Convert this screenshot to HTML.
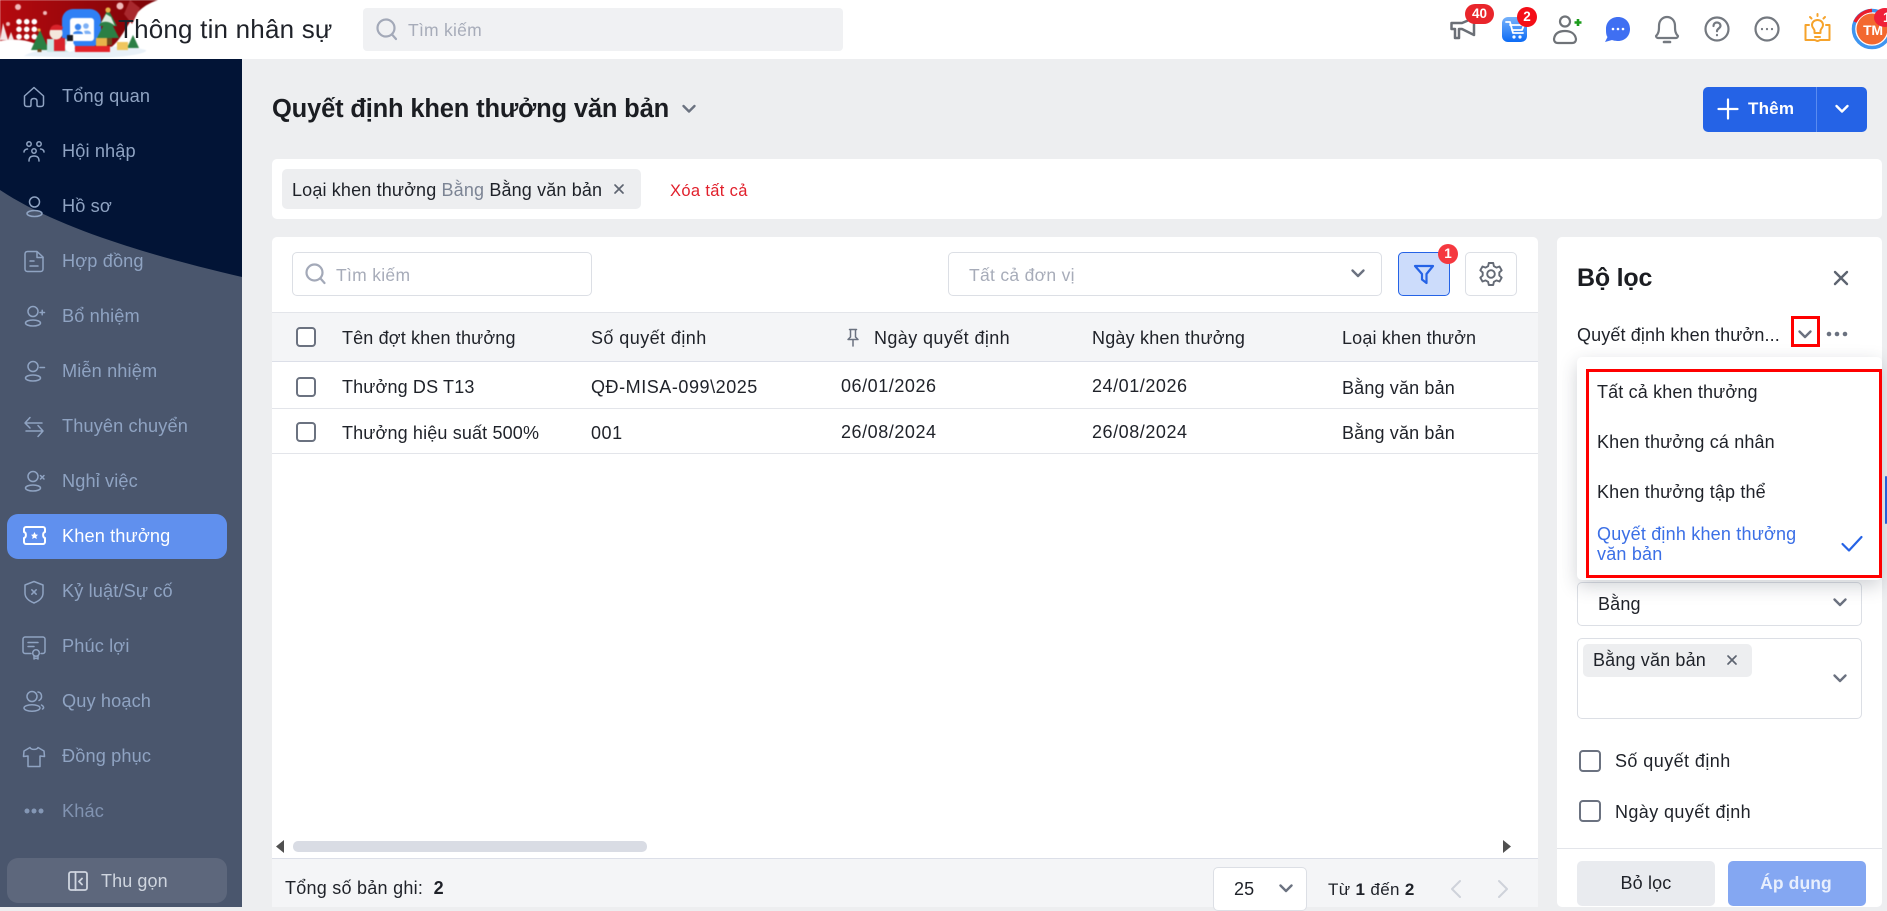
<!DOCTYPE html>
<html lang="vi"><head><meta charset="utf-8"><title>Thông tin nhân sự</title>
<style>
*{box-sizing:border-box}
html,body{margin:0;padding:0;width:1887px;height:907px;overflow:hidden;background:#edeef0;font-family:"Liberation Sans","DejaVu Sans",sans-serif;color:#1f2229}
.a{position:absolute}
.t{position:absolute;white-space:nowrap;font-size:18px;letter-spacing:.15px;line-height:20px}
.w{background:#fff;position:absolute;border-radius:5px}
.nav{color:#8fa3c2;font-size:18.2px;left:62px;letter-spacing:.12px}
.ic{position:absolute;left:22px;fill:none;stroke:#8fa3c2;stroke-width:1.5;stroke-linecap:round;stroke-linejoin:round}
.box{position:absolute;background:#fff;border:1px solid #dcdfe5;border-radius:5px}
.cb{position:absolute;width:20px;height:20px;border:2px solid #6b7280;border-radius:4px;background:#fff}
.hl{position:absolute;height:1px;background:#e3e5ea}
svg{position:absolute;overflow:visible}
.s{fill:none;stroke-linecap:round;stroke-linejoin:round}
</style></head><body>

<!-- header -->
<div class="a" style="left:0;top:0;width:1887px;height:59px;background:#fff"></div>
<svg style="left:0;top:0;filter:blur(.4px)" width="170" height="59" viewBox="0 0 170 59">
<defs><linearGradient id="rd" x1="0" x2="1"><stop offset="0" stop-color="#b50a0f"/><stop offset="1" stop-color="#7c0408"/></linearGradient></defs>
<path d="M0 0H158C146 4 138 10 130 22C122 34 115 50 100 52H0Z" fill="url(#rd)"/>
<path d="M124 14L130 0L140 8L132 24Z" fill="#a8282d"/>
<path d="M0 41C16 38 30 40 42 47C60 52 110 49 146 48V59H0Z" fill="#fff"/>
<path d="M24 56C40 46 70 50 85 48C110 46 130 46 146 50C148 54 120 58 90 58Z" fill="#e9f1f8"/>
<path d="M0 40L3 23L8 40ZM8 40L11 32L14 40Z" fill="#f3e5e5"/>
<g fill="#f0b9b9"><circle cx="18" cy="7" r="3"/><circle cx="120" cy="6" r="3.500"/><circle cx="45" cy="13" r="2"/><circle cx="8" cy="24" r="2"/></g>
<g fill="#fff"><circle cx="19" cy="21.700" r="2.800"/><circle cx="26.700" cy="21.700" r="2.800"/><circle cx="34.300" cy="21.700" r="2.800"/><circle cx="19" cy="29.300" r="2.800"/><circle cx="26.700" cy="29.300" r="2.800"/><circle cx="34.300" cy="29.300" r="2.800"/><circle cx="19" cy="36.700" r="2.800"/><circle cx="26.700" cy="36.700" r="2.800"/><circle cx="34.300" cy="36.700" r="2.800"/></g>
<rect x="62" y="9" width="39" height="38" rx="11" fill="#2f80f5"/>
<rect x="70" y="18" width="24" height="23" rx="3" fill="#fff"/>
<circle cx="78" cy="27" r="3.200" fill="#3a85ee"/><circle cx="86" cy="26" r="2.800" fill="#7db0f5"/>
<path d="M73 34C73 30 83 30 83 34Z" fill="#3a85ee"/><path d="M84 31C88 30 91 31 91 34H85Z" fill="#7db0f5"/>
<path d="M40 30L49 50H31Z" fill="#2a7f42"/><circle cx="39" cy="30" r="1.600" fill="#e8a33c"/><rect x="37.500" y="49" width="4" height="3" fill="#6e4a1d"/>
<path d="M108 9L117 26H113L119 38H97L103 26H99Z" fill="#2b7f44"/><path d="M101 23C106 20 112 23 115 26L111 17L106 14Z" fill="#dfece1"/><circle cx="108" cy="10" r="2.600" fill="#e8b24a"/><rect x="106" y="38" width="6" height="7" fill="#6e4a1d"/>
<path d="M133 35L139 48H127Z" fill="#2b7f44"/>
<path d="M47 39H72V52H47Z" fill="#c8e8e6"/>
<rect x="54" y="38" width="11" height="13" fill="#d9232b"/>
<circle cx="56" cy="33" r="6.500" fill="#f4e7dd"/><path d="M50 30C51 24 58 23 63 27L62 30Z" fill="#d9232b"/>
<circle cx="70" cy="47" r="5" fill="#fff"/><circle cx="70" cy="42" r="3.500" fill="#fff"/><rect x="67" y="35" width="6" height="6" fill="#1b1b20"/>
<rect x="75" y="46" width="35" height="6" fill="#e42229"/>
<rect x="96" y="38" width="11" height="8" fill="#e8b24a"/>
<rect x="117" y="42" width="11" height="8" fill="#f0c65f"/>
</svg>
<div class="t" style="left:118px;top:14px;font-size:26px;line-height:30px;letter-spacing:.2px;color:#1f2229">Thông tin nhân sự</div>
<div class="a" style="left:363px;top:8px;width:480px;height:43px;background:#f0f1f3;border-radius:4px"></div>
<svg style="left:375px;top:17px" width="26" height="26" class="s" stroke="#a3a9b8" stroke-width="2.200"><circle cx="11" cy="11" r="8.500"/><path d="M17 17.500L21 22"/></svg>
<div class="t" style="left:408px;top:20px;color:#a7acb9;font-size:17.500px;letter-spacing:.25px">Tìm kiếm</div>

<!-- top icons -->
<svg style="left:1450px;top:17px" width="28" height="30" class="s" stroke="#6b6f76" stroke-width="2.500"><path d="M1.500 6H12L24 1V18L12 12H9V21H5V12H1.500Z"/></svg>
<div class="a" style="left:1465px;top:4px;width:29px;height:20px;background:#e9252b;border-radius:10px;color:#fff;font-size:13.500px;font-weight:700;text-align:center;line-height:20px">40</div>
<div class="a" style="left:1502px;top:17px;width:25px;height:25px;border-radius:6px;background:linear-gradient(#77b2fb,#0c6bf5)"></div>
<svg style="left:1504px;top:19px" width="22" height="22" class="s" stroke="#fff" stroke-width="1.800"><path d="M2 3H6L9 14H19"/><path d="M6 6H20L18 11H8"/><circle cx="10" cy="18" r=".7"/><circle cx="16" cy="18" r=".7"/></svg>
<div class="a" style="left:1517px;top:7px;width:20px;height:20px;background:#f40e17;border-radius:50%;color:#fff;font-size:13.500px;font-weight:700;text-align:center;line-height:20px">2</div>
<svg style="left:1553px;top:15px" width="32" height="30" class="s" stroke="#6f7378" stroke-width="2.200"><circle cx="12" cy="6.500" r="5"/><path d="M5 28C2 28 1 26 1 24C2 17 8 16 12 16C17 16 22 18 23 24C23 26 22 28 19 28Z"/><path d="M25 4V11M21.500 7.500H28.500" stroke="#1c9c1c" stroke-width="2.600" stroke-linecap="butt"/></svg>
<svg style="left:1605px;top:17px" width="26" height="26"><path d="M13 0C20 0 25 5 25 12S20 24 13 24C11 24 8 23.500 7 23L0 25L2.500 20C1 18 1 15 1 12C1 5 6 0 13 0Z" fill="#3f6ff2"/><circle cx="8" cy="12" r="1.300" fill="#fff"/><circle cx="13" cy="12" r="1.300" fill="#fff"/><circle cx="18" cy="12" r="1.300" fill="#fff"/></svg>
<svg style="left:1654px;top:15px" width="26" height="29" class="s" stroke="#747980" stroke-width="2.200"><path d="M2 21C5 18 5 15 5 11C5 5 9 2 13 2C17 2 21 5 21 11C21 15 21 18 24 21C24 22 23 23 22 23H4C3 23 2 22 2 21Z"/><path d="M10 27H16" stroke-width="2.600"/></svg>
<svg style="left:1704px;top:16px" width="26" height="26" class="s" stroke="#747980" stroke-width="2.200"><circle cx="13" cy="13" r="11.500"/><path d="M9.500 10C9.500 7.800 11 6.500 13 6.500C15 6.500 16.500 8 16.500 9.800C16.500 12.300 13 12.500 13 15.200M13 19V19.200"/></svg>
<svg style="left:1754px;top:16px" width="26" height="26" class="s" stroke="#747980" stroke-width="2.200"><circle cx="13" cy="13" r="11.500"/><path d="M8 13V13.100M13 13V13.100M18 13V13.100"/></svg>
<svg style="left:1804px;top:13px" width="27" height="30" class="s" stroke="#f6a32b" stroke-width="2"><path d="M5 12H1.500V27H10.500C11.500 27 12.500 28 13.500 28C14.500 28 15.500 27 16.500 27H25.500V12H22"/><path d="M13.500 7C10 7 8 9.500 8 12C8 14.500 10 15.500 10.500 17.500V20H16.500V17.500C17 15.500 19 14.500 19 12C19 9.500 17 7 13.500 7Z"/><path d="M13.500 1V3M6 4L7.500 5.500M21 4L19.500 5.500M11 24H16"/></svg>
<svg style="left:1851px;top:8px" width="42" height="42"><circle cx="21" cy="21" r="18.500" fill="none" stroke="#3f95f0" stroke-width="3.500"/><path d="M4 14C7 8 13 3 21 2.500" fill="none" stroke="#ea1e2c" stroke-width="3.500"/><circle cx="21" cy="21" r="15.500" fill="#f3682f"/></svg>
<div class="t" style="left:1857px;top:20px;width:32px;text-align:center;color:#fff;font-weight:700;font-size:14px;letter-spacing:-.2px">TM</div>
<div class="a" style="left:1874px;top:8px;width:22px;height:19px;border-radius:50%;background:#f0203a;color:#fff;font-size:13.500px;font-weight:700;line-height:19px;padding-left:9px">1</div>

<!-- sidebar -->
<div class="a" style="left:0;top:59px;width:242px;height:848px;background:#4a566d"></div>
<svg style="left:0;top:59px" width="242" height="230"><path d="M0 0H242V218C160 199 60 171 0 131Z" fill="#021436"/></svg>

<svg class="ic" style="top:85px" width="24" height="24"><path d="M2.500 11L12 2.500L21.500 11V19C21.500 20.500 20.500 21.500 19 21.500H16.500C15.500 21.500 15 21 15 20V16C15 14.500 14 13.500 12 13.500S9 14.500 9 16V20C9 21 8.500 21.500 7.500 21.500H5C3.500 21.500 2.500 20.500 2.500 19Z"/></svg>
<div class="t nav" style="top:86px">Tổng quan</div>
<svg class="ic" style="top:140px" width="24" height="24"><circle cx="7" cy="4" r="2.200"/><circle cx="17" cy="4" r="2.200"/><circle cx="12" cy="11" r="2.200"/><path d="M7 21C7 17 9 16 12 16S17 17 17 21M2 12C2 10 4 9 5.500 9M22 12C22 10 20 9 18.500 9"/></svg>
<div class="t nav" style="top:141px">Hội nhập</div>
<svg class="ic" style="top:195px" width="24" height="24"><circle cx="12.500" cy="7" r="5"/><ellipse cx="12.500" cy="18.500" rx="7.500" ry="3"/></svg>
<div class="t nav" style="top:196px">Hồ sơ</div>
<svg class="ic" style="top:249px" width="24" height="24"><path d="M5.500 2.500H15L21 8V20C21 21.500 20 22.500 18.500 22.500H5.500C4 22.500 3 21.500 3 20V5C3 3.500 4 2.500 5.500 2.500Z"/><path d="M15 3V8.500H21M8 12H12M8 17H16"/></svg>
<div class="t nav" style="top:251px">Hợp đồng</div>
<svg class="ic" style="top:305px" width="24" height="24"><circle cx="11" cy="6.500" r="5"/><ellipse cx="11" cy="18" rx="7.500" ry="3"/><path d="M18 7.500H22.500M20.200 5.200V9.800"/></svg>
<div class="t nav" style="top:306px">Bổ nhiệm</div>
<svg class="ic" style="top:360px" width="24" height="24"><circle cx="11" cy="6.500" r="5"/><ellipse cx="11" cy="18" rx="7.500" ry="3"/><path d="M18 7.500H22.500"/></svg>
<div class="t nav" style="top:361px">Miễn nhiệm</div>
<svg class="ic" style="top:415px" width="24" height="24"><path d="M3 8H20M8 2.500L3 8L8 13M21 16H4M16 10.500L21 16L16 21.500"/></svg>
<div class="t nav" style="top:416px">Thuyên chuyển</div>
<svg class="ic" style="top:470px" width="24" height="24"><circle cx="11" cy="6.500" r="5"/><ellipse cx="11" cy="18" rx="7.500" ry="3"/><path d="M18.500 5.500L22 9M22 5.500L18.500 9"/></svg>
<div class="t nav" style="top:471px">Nghỉ việc</div>

<div class="a" style="left:7px;top:514px;width:220px;height:45px;background:#6090ee;border-radius:11px"></div>
<svg class="ic" style="top:524px;stroke:#fff;stroke-width:2" width="24" height="24"><path d="M4 3H21C22 3 23 4 23 5V8C20.500 8.500 20.500 13.500 23 14V18C23 19 22 20 21 20H4C3 20 2 19 2 18V14C4.500 13.500 4.500 8.500 2 8V5C2 4 3 3 4 3Z"/><path d="M12.500 8L13.700 10.500L16 10.800L14.300 12.500L14.800 15L12.500 13.800L10.200 15L10.700 12.500L9 10.800L11.300 10.500Z" fill="#fff" stroke="none"/></svg>
<div class="t nav" style="top:526px;color:#fff">Khen thưởng</div>

<svg class="ic" style="top:580px" width="24" height="24"><path d="M12 1.500L21 5V13C21 18 17 21 12 23C7 21 3 18 3 13V5Z"/><path d="M9.800 9.800L14.200 14.200M14.200 9.800L9.800 14.200"/></svg>
<div class="t nav" style="top:581px">Kỷ luật/Sự cố</div>
<svg class="ic" style="top:635px" width="24" height="24"><path d="M9 18.500H3C2 18.500 1 17.500 1 16.500V4C1 3 2 2 3 2H21C22 2 23 3 23 4V16.500C23 17.500 22 18.500 21 18.500H19"/><path d="M6 7.500H16M6 11.500H12"/><circle cx="14" cy="18" r="3.300"/><path d="M12 21V24L14 23L16 24V21"/></svg>
<div class="t nav" style="top:636px">Phúc lợi</div>
<svg class="ic" style="top:690px" width="24" height="24"><circle cx="10" cy="6.500" r="5"/><ellipse cx="10" cy="18" rx="8" ry="3.200"/><path d="M16 2C20 2.500 21 8.500 17 10.500M19.500 15C21.500 16 22.500 18 20.500 19"/></svg>
<div class="t nav" style="top:691px">Quy hoạch</div>
<svg class="ic" style="top:745px" width="24" height="24"><path d="M8 2.500L2 6L1.500 11.500L6 11V21.500H18V11L22.500 11.500L22 6L16 2.500C15 5 9 5 8 2.500Z"/></svg>
<div class="t nav" style="top:746px">Đồng phục</div>
<svg style="left:24px;top:805px" width="22" height="12" fill="#8fa3c2" opacity=".85"><circle cx="3" cy="6" r="2.500"/><circle cx="10" cy="6" r="2.500"/><circle cx="17" cy="6" r="2.500"/></svg>
<div class="t nav" style="top:801px;opacity:.8">Khác</div>

<div class="a" style="left:7px;top:858px;width:220px;height:45px;background:#5d677c;border-radius:11px"></div>
<svg class="s" style="left:68px;top:871px" width="20" height="20" stroke="#cfd5df" stroke-width="1.800"><rect x="1" y="1" width="18" height="18" rx="2"/><path d="M7.500 1V19M14 7.500L11 10.500L14 13.500"/></svg>
<div class="t" style="left:101px;top:871px;color:#cfd5df;font-size:18px;letter-spacing:.1px">Thu gọn</div>

<!-- page title -->
<div class="t" style="left:272px;top:94px;font-size:25.500px;line-height:30px;font-weight:700;letter-spacing:-.17px;color:#1b1d22">Quyết định khen thưởng văn bản</div>
<svg class="s" style="left:682px;top:103px" width="14" height="12" stroke="#6b7280" stroke-width="2.400"><path d="M1.500 3L7 8.500L12.500 3"/></svg>

<div class="a" style="left:1703px;top:87px;width:164px;height:45px;background:#2563e6;border-radius:5px"></div>
<div class="a" style="left:1816px;top:87px;width:1px;height:45px;background:#5a8bf0"></div>
<svg class="s" style="left:1717px;top:98px" width="22" height="22" stroke="#fff" stroke-width="2.200"><path d="M11 1.500V20.500M1.500 11H20.500"/></svg>
<div class="t" style="left:1748px;top:99px;color:#fff;font-weight:700;font-size:17px;letter-spacing:.2px">Thêm</div>
<svg class="s" style="left:1835px;top:103px" width="14" height="12" stroke="#fff" stroke-width="2.400"><path d="M1.500 3L7 8.500L12.500 3"/></svg>

<!-- chips -->
<div class="w" style="left:272px;top:159px;width:1610px;height:60px"></div>
<div class="a" style="left:282px;top:169px;width:359px;height:40px;background:#edeef0;border-radius:5px"></div>
<div class="t" style="left:292px;top:180px"><span>Loại khen thưởng</span> <span style="color:#7c8494">Bằng</span> <span>Bằng văn bản</span></div>
<svg class="s" style="left:614px;top:184px" width="10" height="10" stroke="#5d6470" stroke-width="1.700"><path d="M1 1L9 9M9 1L1 9"/></svg>
<div class="t" style="left:670px;top:181px;color:#e1202c;font-size:16.500px;letter-spacing:.35px">Xóa tất cả</div>

<!-- table card -->
<div class="w" style="left:272px;top:237px;width:1266px;height:670px"></div>
<div class="box" style="left:292px;top:252px;width:300px;height:44px"></div>
<svg class="s" style="left:304px;top:262px" width="24" height="24" stroke="#a3a9b8" stroke-width="2.200"><circle cx="10.500" cy="10.500" r="8"/><path d="M16.500 16.500L20.500 21"/></svg>
<div class="t" style="left:336px;top:265px;color:#a7acb9;font-size:17.500px;letter-spacing:.3px">Tìm kiếm</div>
<div class="box" style="left:948px;top:252px;width:434px;height:44px"></div>
<div class="t" style="left:969px;top:265px;color:#a7acb9;font-size:17.500px;letter-spacing:.3px">Tất cả đơn vị</div>
<svg class="s" style="left:1351px;top:268px" width="14" height="12" stroke="#6b7280" stroke-width="2.400"><path d="M1.500 2.500L7 8L12.500 2.500"/></svg>
<div class="a" style="left:1398px;top:252px;width:52px;height:44px;background:#ccdcfb;border:1.500px solid #2563e6;border-radius:5px"></div>
<svg class="s" style="left:1413px;top:263px" width="22" height="22" stroke="#2563e6" stroke-width="2.200"><path d="M2 3H20L13.500 11V20L9 16.500V11Z"/></svg>
<div class="a" style="left:1438px;top:244px;width:20px;height:20px;border-radius:50%;background:#f5383f;color:#fff;font-size:13.500px;font-weight:700;text-align:center;line-height:20px">1</div>
<div class="box" style="left:1465px;top:252px;width:52px;height:44px"></div>
<svg class="s" style="left:1478px;top:261px" width="26" height="26" stroke="#646a75" stroke-width="1.900"><circle cx="13" cy="13" r="3.800"/><path d="M10.800 2H15.200L15.900 5.200L18.400 6.600L21.500 5.500L23.700 9.300L21.300 11.500V14.500L23.700 16.700L21.500 20.500L18.400 19.400L15.900 20.800L15.200 24H10.800L10.100 20.800L7.600 19.400L4.500 20.500L2.300 16.700L4.700 14.500V11.500L2.300 9.300L4.500 5.500L7.600 6.600L10.100 5.200Z"/></svg>

<div class="a" style="left:272px;top:312px;width:1266px;height:50px;background:#f4f5f7;border-top:1px solid #e3e5ea;border-bottom:1px solid #dcdfe8"></div>
<div class="cb" style="left:296px;top:327px"></div>
<div class="t" style="left:342px;top:328px">Tên đợt khen thưởng</div>
<div class="t" style="left:591px;top:328px;letter-spacing:.43px">Số quyết định</div>
<svg class="s" style="left:846px;top:328px" width="14" height="20" stroke="#6b7280" stroke-width="1.500"><path d="M3.500 1.500H10.500M4.500 1.500V9L2 11.500H12L9.500 9V1.500M7 11.500V18"/></svg>
<div class="t" style="left:874px;top:328px;letter-spacing:.4px">Ngày quyết định</div>
<div class="t" style="left:1092px;top:328px;letter-spacing:.2px">Ngày khen thưởng</div>
<div class="t" style="left:1342px;top:328px">Loại khen thưởn</div>

<div class="cb" style="left:296px;top:377px"></div>
<div class="t" style="left:342px;top:377px">Thưởng DS T13</div>
<div class="t" style="left:591px;top:377px;letter-spacing:.55px">QĐ-MISA-099\2025</div>
<div class="t" style="left:841px;top:376px;letter-spacing:.55px">06/01/2026</div>
<div class="t" style="left:1092px;top:376px;letter-spacing:.55px">24/01/2026</div>
<div class="t" style="left:1342px;top:378px">Bằng văn bản</div>
<div class="hl" style="left:272px;top:408px;width:1266px"></div>
<div class="cb" style="left:296px;top:422px"></div>
<div class="t" style="left:342px;top:423px">Thưởng hiệu suất 500%</div>
<div class="t" style="left:591px;top:423px;letter-spacing:.55px">001</div>
<div class="t" style="left:841px;top:422px;letter-spacing:.55px">26/08/2024</div>
<div class="t" style="left:1092px;top:422px;letter-spacing:.55px">26/08/2024</div>
<div class="t" style="left:1342px;top:423px">Bằng văn bản</div>
<div class="hl" style="left:272px;top:453px;width:1266px"></div>

<svg style="left:276px;top:840px" width="10" height="14"><path d="M8 0V13L0 6.500Z" fill="#505050"/></svg>
<div class="a" style="left:293px;top:841px;width:354px;height:11px;background:#d9dce4;border-radius:5px"></div>
<svg style="left:1503px;top:840px" width="10" height="14"><path d="M0 0V13L8 6.500Z" fill="#505050"/></svg>
<div class="a" style="left:272px;top:858px;width:1266px;height:49px;background:#f4f5f7;border-top:1px solid #dcdfe8"></div>
<div class="t" style="left:285px;top:878px;letter-spacing:.25px">Tổng số bản ghi:&nbsp; <b>2</b></div>
<div class="a" style="left:1213px;top:867px;width:94px;height:44px;background:#fff;border:1px solid #dcdfe5;border-radius:5px"></div>
<div class="t" style="left:1234px;top:879px">25</div>
<svg class="s" style="left:1279px;top:883px" width="14" height="12" stroke="#6b7280" stroke-width="2.400"><path d="M1.500 2.500L7 8L12.500 2.500"/></svg>
<div class="t" style="left:1328px;top:880px;font-size:17px;letter-spacing:.35px">Từ <b>1</b> đến <b>2</b></div>
<svg class="s" style="left:1449px;top:879px" width="14" height="20" stroke="#ced2da" stroke-width="2"><path d="M11 2L3 10L11 18"/></svg>
<svg class="s" style="left:1496px;top:879px" width="14" height="20" stroke="#ced2da" stroke-width="2"><path d="M3 2L11 10L3 18"/></svg>

<!-- filter panel -->
<div class="w" style="left:1557px;top:237px;width:325px;height:670px"></div>
<div class="a" style="left:1885px;top:476px;width:2px;height:48px;background:#2563e6;border-radius:2px"></div>
<div class="t" style="left:1577px;top:263px;font-size:25px;line-height:30px;font-weight:700;letter-spacing:-.2px;color:#1b1d22">Bộ lọc</div>
<svg class="s" style="left:1833px;top:270px" width="16" height="16" stroke="#5d6470" stroke-width="2.400"><path d="M2 2L14 14M14 2L2 14"/></svg>
<div class="t" style="left:1577px;top:325px;letter-spacing:.12px">Quyết định khen thưởn...</div>
<svg class="s" style="left:1798px;top:329px" width="14" height="12" stroke="#6b7280" stroke-width="2.400"><path d="M1.500 2.500L7 8L12.500 2.500"/></svg>
<svg style="left:1826px;top:329px" width="24" height="10" fill="#6b7280"><circle cx="3" cy="5" r="2.300"/><circle cx="11" cy="5" r="2.300"/><circle cx="19" cy="5" r="2.300"/></svg>
<div class="a" style="left:1791px;top:316px;width:29px;height:31px;border:3px solid #f00"></div>

<div class="box" style="left:1577px;top:582px;width:285px;height:44px"></div>
<div class="t" style="left:1598px;top:594px">Bằng</div>
<svg class="s" style="left:1833px;top:597px" width="14" height="12" stroke="#6b7280" stroke-width="2.400"><path d="M1.500 2.500L7 8L12.500 2.500"/></svg>
<div class="box" style="left:1577px;top:638px;width:285px;height:81px"></div>
<div class="a" style="left:1583px;top:644px;width:169px;height:33px;background:#edeef0;border-radius:5px"></div>
<div class="t" style="left:1593px;top:650px">Bằng văn bản</div>
<svg class="s" style="left:1727px;top:655px" width="10" height="10" stroke="#5d6470" stroke-width="1.700"><path d="M1 1L9 9M9 1L1 9"/></svg>
<svg class="s" style="left:1833px;top:673px" width="14" height="12" stroke="#6b7280" stroke-width="2.400"><path d="M1.500 2.500L7 8L12.500 2.500"/></svg>
<div class="cb" style="left:1579px;top:750px;width:22px;height:22px"></div>
<div class="t" style="left:1615px;top:751px;letter-spacing:.43px">Số quyết định</div>
<div class="cb" style="left:1579px;top:800px;width:22px;height:22px"></div>
<div class="t" style="left:1615px;top:802px;letter-spacing:.4px">Ngày quyết định</div>
<div class="hl" style="left:1557px;top:848px;width:325px"></div>
<div class="a" style="left:1577px;top:861px;width:138px;height:45px;background:#e9ebef;border-radius:5px"></div>
<div class="t" style="left:1577px;top:873px;width:138px;text-align:center">Bỏ lọc</div>
<div class="a" style="left:1728px;top:861px;width:138px;height:45px;background:#84a7f2;border-radius:5px"></div>
<div class="t" style="left:1727px;top:873px;width:138px;text-align:center;color:#e8effd;font-weight:700;font-size:17.500px;letter-spacing:.1px">Áp dụng</div>

<!-- dropdown -->
<div class="a" style="left:1577px;top:357px;width:305px;height:223px;background:#fff;border-radius:5px;box-shadow:0 6px 18px rgba(40,50,70,.22)"></div>
<div class="a" style="left:1586px;top:369px;width:296px;height:209px;border:3px solid #f00"></div>
<div class="t" style="left:1597px;top:382px">Tất cả khen thưởng</div>
<div class="t" style="left:1597px;top:432px">Khen thưởng cá nhân</div>
<div class="t" style="left:1597px;top:482px">Khen thưởng tập thể</div>
<div class="t" style="left:1597px;top:524px;color:#3b6fe6;letter-spacing:.2px">Quyết định khen thưởng</div>
<div class="t" style="left:1597px;top:544px;color:#3b6fe6;letter-spacing:.2px">văn bản</div>
<svg class="s" style="left:1841px;top:535px" width="22" height="18" stroke="#2563e6" stroke-width="2.200"><path d="M1.500 9L8 15.500L20.500 2"/></svg>
</body></html>
